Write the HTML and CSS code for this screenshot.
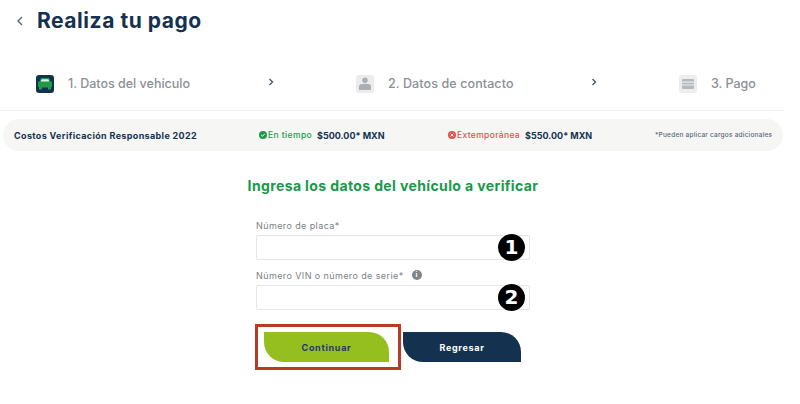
FILE: index.html
```html
<!DOCTYPE html>
<html lang="es">
<head>
    <meta charset="UTF-8">
    <title>Realiza tu pago</title>
    <link rel="stylesheet" href="styles.css">
</head>
<body>
    <div class="top">
        <svg class="back" width="8" height="10" viewBox="0 0 8 10"><path d="M6 1 2 5l4 4" fill="none" stroke="#5a6672" stroke-width="1.400"/></svg>
        <h1>Realiza tu pago</h1>
    </div>
    <div class="steps">
        <div class="step step1">
            <span class="icon icon-on">
                <svg width="14" height="12" viewBox="0 0 14 12"><path d="M3 0h8l1.400 3.500H14V9h-1v2.500h-3V9.500H4v2H1V9H0V3.500h1.600z" fill="#1f9a48"/><path d="M3.600 1.200h6.800l.8 2.300H2.800z" fill="#d9f2df"/></svg>
            </span>
            <span>1. Datos del vehículo</span>
        </div>
        <svg class="arrow" width="8" height="10" viewBox="0 0 8 10"><path d="M2.500 2l3 3-3 3" fill="none" stroke="#46525e" stroke-width="1.300"/></svg>
        <div class="step step2">
            <span class="icon">
                <svg width="12" height="13" viewBox="0 0 12 13"><circle cx="6" cy="3.200" r="2.700" fill="#a9afb5"/><path d="M0 13V9.500C0 7.500 2 6.800 6 6.800s6 .7 6 2.700V13z" fill="#a9afb5"/></svg>
            </span>
            <span>2. Datos de contacto</span>
        </div>
        <svg class="arrow" width="8" height="10" viewBox="0 0 8 10"><path d="M2.500 2l3 3-3 3" fill="none" stroke="#46525e" stroke-width="1.300"/></svg>
        <div class="step step3">
            <span class="icon">
                <svg width="12" height="10" viewBox="0 0 12 10"><rect width="12" height="10" rx="1" fill="#b4b9be"/><rect y="2.500" width="12" height="1.200" fill="#eceded"/><rect y="5.500" width="12" height="1" fill="#eceded"/></svg>
            </span>
            <span>3. Pago</span>
        </div>
    </div>
    <div class="costs">
        <strong class="costs-title">Costos Verificación Responsable 2022</strong>
        <div class="price price1">
            <svg width="8" height="8" viewBox="0 0 8 8"><circle cx="4" cy="4" r="4" fill="#1f9a48"/><path d="M2.200 4l1.300 1.300 2.300-2.500" fill="none" stroke="#fff" stroke-width="1"/></svg>
            <span class="ok">En tiempo</span>
            <strong>$500.00* MXN</strong>
        </div>
        <div class="price price2">
            <svg width="8" height="8" viewBox="0 0 8 8"><circle cx="4" cy="4" r="4" fill="#e2504a"/><path d="M2.600 2.600l2.800 2.800m0-2.800L2.600 5.400" fill="none" stroke="#fff" stroke-width="1"/></svg>
            <span class="late">Extemporánea</span>
            <strong>$550.00* MXN</strong>
        </div>
        <span class="note">*Pueden aplicar cargos adicionales</span>
    </div>
    <h2>Ingresa los datos del vehículo a verificar</h2>
    <form class="form">
        <label>Número de placa*</label>
        <div class="field">
            <input type="text">
            <span class="badge">1</span>
        </div>
        <label>Número VIN o número de serie* <span class="info">i</span></label>
        <div class="field">
            <input type="text">
            <span class="badge">2</span>
        </div>
        <div class="buttons">
            <div class="mark">
                <button type="button" class="btn btn-green">Continuar</button>
            </div>
            <button type="button" class="btn btn-blue">Regresar</button>
        </div>
    </form>
</body>
</html>
```

FILE: styles.css
```css
* {
    margin: 0;
    padding: 0;
    box-sizing: border-box;
}
body {
    background: #fff;
    font-family: Inter, sans-serif;
    color: #14324f;
    height: 404px;
    overflow: hidden;
}
.top {
    display: flex;
    align-items: center;
    height: 41px;
    padding-left: 16px;
}
.back {
    margin-right: 13px;
}
h1 {
    font-size: 21px;
    font-weight: 700;
    letter-spacing: .55px;
    color: #14324f;
}
.steps {
    display: flex;
    align-items: center;
    height: 70px;
    width: 785px;
    padding: 16px 0 0 36px;
    border-bottom: 1px solid #f2f2f2;
    font-size: 12.500px;
    font-weight: 500;
    color: #8b9095;
}
.step {
    display: flex;
    align-items: center;
    gap: 14px;
}
.step1 { width: 231px; }
.step2 { width: 234px; margin-left: 81px; }
.step3 { margin-left: 81px; }
.step2 span:last-child { letter-spacing: .1px; }
.arrow {
    flex: none;
    margin-bottom: 3px;
}
.icon {
    width: 18px;
    height: 18px;
    border-radius: 3px;
    background: #ececed;
    display: flex;
    align-items: center;
    justify-content: center;
}
.icon-on {
    background: #14324f;
}
.costs {
    display: flex;
    align-items: center;
    width: 780px;
    height: 32px;
    margin: 8px 0 0 3px;
    padding-left: 11px;
    border-radius: 16px;
    background: #f6f6f5;
    font-size: 9px;
}
.costs strong {
    font-weight: 700;
}
.costs-title {
    width: 245px;
    letter-spacing: .35px;
}
.price {
    display: flex;
    align-items: center;
    gap: 1px;
    font-size: 8.500px;
    font-weight: 500;
}
.price strong {
    margin-left: 4px;
    font-size: 9px;
}
.price1 { width: 189px; }
.price2 { width: 207px; }
.ok { color: #1f9a48; letter-spacing: .4px; }
.late { color: #e2504a; letter-spacing: .35px; }
.note {
    font-size: 6.500px;
    font-weight: 500;
    letter-spacing: .22px;
    color: #5b6874;
}
h2 {
    width: 786px;
    margin-top: 26px;
    text-align: center;
    font-size: 14px;
    font-weight: 700;
    letter-spacing: .38px;
    color: #18994a;
}
.form {
    width: 274px;
    margin: 25px 0 0 256px;
}
label {
    display: flex;
    align-items: center;
    gap: 8px;
    height: 16px;
    padding-bottom: 4px;
    font-size: 9px;
    letter-spacing: .4px;
    color: #7a7f83;
}
.info {
    width: 10px;
    height: 10px;
    border-radius: 50%;
    background: #7f8489;
    color: #fff;
    font-size: 7px;
    font-weight: 700;
    text-align: center;
    line-height: 10px;
}
.field {
    position: relative;
    height: 25px;
    margin-bottom: 9px;
}
input {
    display: block;
    width: 100%;
    height: 100%;
    border: 1px solid #e6e6e6;
    border-radius: 2px;
    background: #fff;
}
.badge {
    position: absolute;
    top: -1px;
    right: 5px;
    width: 27px;
    height: 27px;
    border-radius: 50%;
    background: #000;
    color: #fff;
    font-family: "DejaVu Sans", sans-serif;
    font-size: 20px;
    font-weight: 700;
    text-align: center;
    line-height: 27px;
}
.buttons {
    display: flex;
    align-items: center;
    margin: 14px 0 0 -1px;
}
.mark {
    width: 146px;
    height: 46px;
    padding: 5px 6px;
    border: 3px solid #b83b28;
}
.btn {
    display: block;
    height: 30px;
    border: none;
    border-radius: 0 20px 0 20px;
    font-family: Inter, sans-serif;
    font-size: 9px;
    font-weight: 700;
    letter-spacing: .7px;
}
.btn-green {
    width: 125px;
    background: #95bf1f;
    color: #26386a;
}
.btn-blue {
    width: 118px;
    margin-left: 2px;
    background: #14324f;
    color: #fff;
}
```
